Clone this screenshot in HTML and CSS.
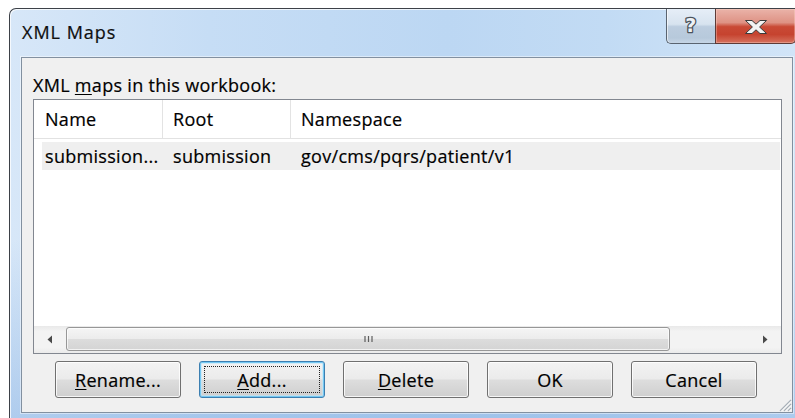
FILE: index.html
```html
<!DOCTYPE html>
<html lang="en">
<head>
<meta charset="utf-8">
<title>XML Maps</title>
<link rel="stylesheet" href="styles.css">
</head>
<body>
<div class="window">
  <div class="titlebar">
    <div class="title">XML Maps</div>
    <div class="caption-buttons">
      <div class="cap help">
        <svg width="16" height="20" viewBox="0 0 16 20">
          <text x="8" y="17" text-anchor="middle" class="help-glyph">?</text>
        </svg>
      </div>
      <div class="cap close">
        <svg width="24" height="14" viewBox="0 0 24 14">
          <path d="M1.5 0.5h6.5l4 3.7 4-3.7h6.5l-6.9 6.5 6.9 6.5h-6.5l-4-3.7-4 3.7h-6.5l6.9-6.5z" fill="#f4f4f4" stroke="#3b3b3b" stroke-width="1"/>
        </svg>
      </div>
    </div>
  </div>
  <div class="client">
    <div class="label">XML <u>m</u>aps in this workbook:</div>
    <div class="listbox">
      <div class="header">
        <div class="hcol c1">Name</div>
        <div class="hcol c2">Root</div>
        <div class="hcol c3">Namespace</div>
      </div>
      <div class="rows">
        <div class="row">
          <div class="cell c1">submission...</div>
          <div class="cell c2">submission</div>
          <div class="cell c3">gov/cms/pqrs/patient/v1</div>
        </div>
      </div>
      <div class="hscroll">
        <div class="arrow">
          <svg width="6" height="9" viewBox="0 0 6 9"><path d="M5 0.5v8L0.5 4.5z" fill="#4a4a4a"/></svg>
        </div>
        <div class="track">
          <div class="thumb">
            <svg width="9" height="8" viewBox="0 0 9 8"><path d="M1 1v6M4.5 1v6M8 1v6" stroke="#5d5d5d" stroke-width="1.2"/></svg>
          </div>
        </div>
        <div class="arrow">
          <svg width="6" height="9" viewBox="0 0 6 9"><path d="M1 0.5v8L5.5 4.5z" fill="#4a4a4a"/></svg>
        </div>
      </div>
    </div>
    <div class="buttons">
      <div class="btn"><u>R</u>ename...</div>
      <div class="btn default"><span class="focus"><u>A</u>dd...</span></div>
      <div class="btn"><u>D</u>elete</div>
      <div class="btn">OK</div>
      <div class="btn">Cancel</div>
    </div>
    <svg class="sizegrip" width="16" height="16" viewBox="0 0 16 16">
      <path d="M15 4L4 15M15 8L8 15M15 12L12 15" stroke="#a8b0b8" stroke-width="1.3"/>
      <path d="M15.5 5L5 15.5M15.5 9L9 15.5M15.5 13L13 15.5" stroke="#ffffff" stroke-width="0.8"/>
    </svg>
  </div>
</div>
</body>
</html>
```

FILE: styles.css
```css
html, body {
  margin: 0;
  padding: 0;
  background: #ffffff;
  overflow: hidden;
}

body {
  width: 795px;
  height: 418px;
  font-family: "Open Sans", "Noto Sans", sans-serif;
  font-size: 18px;
  letter-spacing: 0.3px;
  color: #000;
  -webkit-text-stroke: 0.2px #000;
}

u {
  text-decoration: underline;
  text-underline-offset: 2px;
  text-decoration-thickness: 1px;
}

/* Aero glass frame */
.window {
  margin: 8px 0 0 9px;
  width: 796px;
  height: 420px;
  box-sizing: border-box;
  border: 1px solid #3d4148;
  border-right: none;
  border-bottom: none;
  border-radius: 7px 0 0 0;
  padding: 0 0 0 11px;
  background:
    linear-gradient(to bottom, rgba(255,255,255,0) 55%, rgba(110,160,220,0.4) 100%),
    linear-gradient(90deg, #d7e7f8 0%, #c6ddf5 25%, #bcd7f3 55%, #c2dbf4 75%, #d2e5f8 100%);
  box-shadow: inset 1px 1px 0 rgba(255,255,255,0.75);
  position: relative;
}

.titlebar {
  height: 48px;
  display: flex;
  justify-content: space-between;
  align-items: flex-start;
  margin-right: 9px;
}

.title {
  padding: 11px 0 0 1px;
  line-height: 24px;
  letter-spacing: 1px;
  color: #111;
}

.caption-buttons {
  display: flex;
  height: 35px;
}

.cap {
  height: 35px;
  box-sizing: border-box;
  border: 1px solid #5a6470;
  border-top: none;
  display: flex;
  align-items: center;
  justify-content: center;
  -webkit-text-stroke: 0;
}

.help {
  width: 49px;
  border-right: none;
  border-radius: 0 0 0 5px;
  background: linear-gradient(to bottom, #e6eef7 0%, #d7e3ef 45%, #bccddf 52%, #b7c9db 85%, #c6d6e6 100%);
  box-shadow: inset 1px 0 0 rgba(255,255,255,0.6);
}

.help svg {
  display: block;
  margin-top: -3px;
}

.help-glyph {
  font-family: "DejaVu Sans", sans-serif;
  font-weight: bold;
  font-size: 19px;
  fill: #eef2f6;
  stroke: #4a525c;
  stroke-width: 2.6px;
  paint-order: stroke;
  stroke-linejoin: round;
}

.close {
  width: 81px;
  border-radius: 0 0 5px 0;
  border-color: #5e3a36;
  background: linear-gradient(to bottom, #eab3a9 0%, #de9284 40%, #c94a36 52%, #c6432f 75%, #d6725f 100%);
  box-shadow: inset 0 0 0 1px rgba(255,220,210,0.35);
}

.close svg {
  display: block;
  margin-top: 2px;
}

/* Dialog client area */
.client {
  width: 772px;
  height: 356px;
  box-sizing: border-box;
  border: 1px solid #8290a0;
  background: #f0f0f0;
  padding: 16px 10px 0 11px;
  display: flex;
  flex-direction: column;
  position: relative;
  box-shadow: 0 0 0 1px rgba(255,255,255,0.45);
}

.label {
  line-height: 22px;
  margin-bottom: 3px;
}

.listbox {
  height: 255px;
  box-sizing: border-box;
  border: 1px solid #828790;
  background: #ffffff;
  display: flex;
  flex-direction: column;
}

.header {
  display: flex;
  height: 39px;
  box-sizing: border-box;
  border-bottom: 1px solid #e2e2e2;
}

.hcol {
  line-height: 38px;
  box-sizing: border-box;
}

.hcol.c1 {
  width: 129px;
  padding-left: 11px;
  border-right: 1px solid #e3e3e3;
}

.hcol.c2 {
  width: 128px;
  padding-left: 10px;
  border-right: 1px solid #e3e3e3;
}

.hcol.c3 {
  padding-left: 10px;
}

.rows {
  flex: 1;
  padding: 3px 1px 0 8px;
}

.row {
  display: flex;
  height: 28px;
  line-height: 28px;
  background: #efefef;
}

.cell {
  box-sizing: border-box;
  white-space: nowrap;
  overflow: hidden;
}

.cell.c1 {
  width: 121px;
  padding-left: 3px;
}

.cell.c2 {
  width: 128px;
  padding-left: 10px;
}

.cell.c3 {
  padding-left: 10px;
}

/* Horizontal scrollbar */
.hscroll {
  height: 27px;
  display: flex;
  background: linear-gradient(to bottom, #e9e9e9 0%, #f3f3f3 20%, #f3f3f3 80%, #ebebeb 100%);
}

.arrow {
  width: 32px;
  display: flex;
  align-items: center;
  justify-content: center;
}

.track {
  flex: 1;
  display: flex;
  padding: 1px 0 2px 0;
}

.thumb {
  width: 604px;
  box-sizing: border-box;
  border: 1px solid #979797;
  border-radius: 3px;
  background: linear-gradient(to bottom, #f5f5f5 0%, #ececec 48%, #dcdcdc 52%, #d4d4d4 100%);
  box-shadow: inset 0 0 0 1px rgba(255,255,255,0.7);
  display: flex;
  align-items: center;
  justify-content: center;
}

/* Command buttons */
.buttons {
  display: flex;
  gap: 18px;
  margin: 7px 0 0 22px;
}

.btn {
  width: 126px;
  height: 37px;
  box-sizing: border-box;
  border: 1px solid #707070;
  border-radius: 3px;
  background: linear-gradient(to bottom, #f3f3f3 0%, #ebebeb 48%, #dddddd 52%, #cfcfcf 100%);
  box-shadow: inset 0 0 0 1px rgba(255,255,255,0.8);
  display: flex;
  align-items: center;
  justify-content: center;
  line-height: 22px;
}

.btn.default {
  border-color: #3c7fb1;
  box-shadow: inset 0 0 0 1px #74c8f2, inset 0 0 0 2px rgba(190,230,250,0.6);
  padding: 4px;
}

.focus {
  flex: 1;
  align-self: stretch;
  border: 1px dotted #222;
  display: flex;
  align-items: center;
  justify-content: center;
}

.sizegrip {
  position: absolute;
  right: 0;
  bottom: 0;
}
```
